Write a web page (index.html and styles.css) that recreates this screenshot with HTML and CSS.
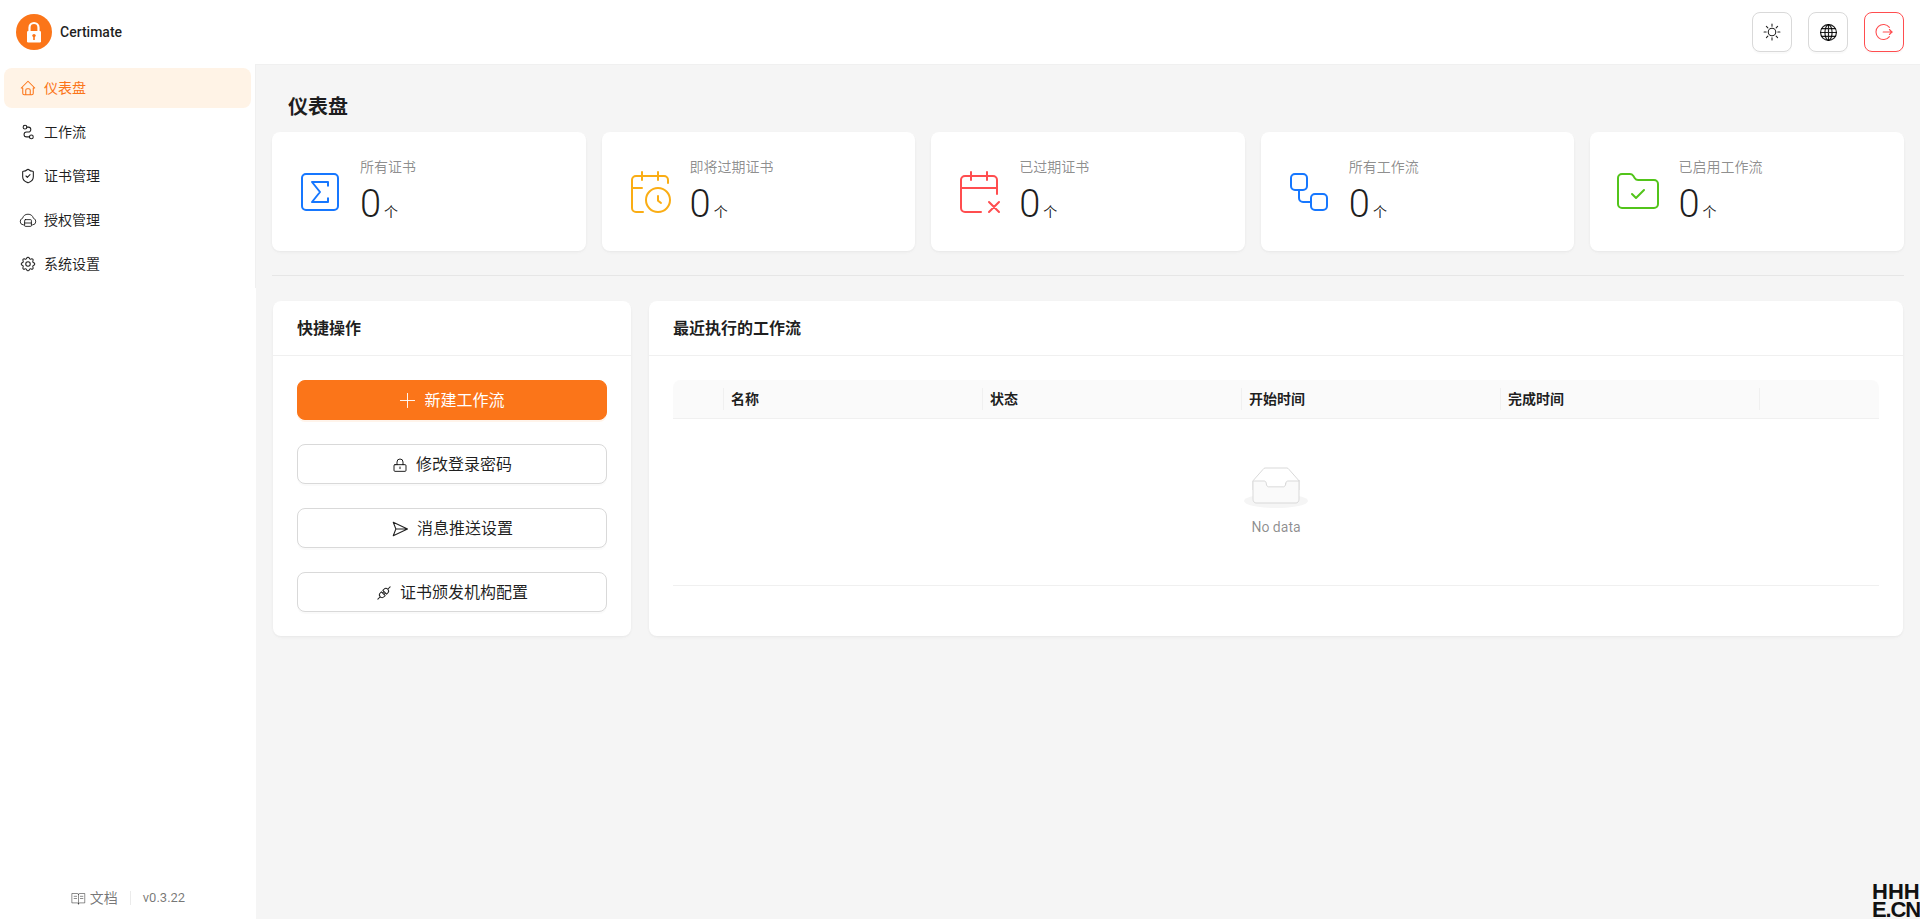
FILE: index.html
```html
<!DOCTYPE html>
<html lang="zh-CN">
<head>
<meta charset="utf-8">
<title>Certimate</title>
<link rel="stylesheet" href="styles.css">
</head>
<body>
<div class="app">
  <aside class="sidebar">
    <div class="brand">
      <svg class="logo" viewBox="0 0 36 36"><circle cx="18" cy="18" r="18" fill="#fb7519"/><path d="M13.5 18v-4.5a4.500 4.500 0 0 1 9 0V18" fill="none" stroke="#fff" stroke-width="2.200"/><rect x="11" y="17" width="14" height="11.500" rx="1.200" fill="#fff"/><circle cx="18" cy="21.600" r="1.700" fill="#fb7519"/><rect x="17.200" y="22" width="1.600" height="4" fill="#fb7519"/></svg>
      <span class="brand-name">Certimate</span>
    </div>
    <nav class="menu">
      <a class="menu-item active"><svg class="nav-ico" viewBox="0 0 24 24"><path d="M5 12H3l9-9 9 9h-2M5 12v7a2 2 0 0 0 2 2h10a2 2 0 0 0 2-2v-7M9 21v-6a2 2 0 0 1 2-2h2a2 2 0 0 1 2 2v6"/></svg><span>仪表盘</span></a>
      <a class="menu-item"><svg class="nav-ico" viewBox="0 0 24 24"><circle cx="8" cy="5.500" r="2.500"/><circle cx="16.500" cy="18.500" r="2.500"/><path d="M10.500 5.500h2a3.250 3.250 0 0 1 0 6.500h-2.500a3.250 3.250 0 0 0 0 6.500H14"/></svg><span>工作流</span></a>
      <a class="menu-item"><svg class="nav-ico small" viewBox="0 0 24 24"><path d="M20 13c0 5-3.500 7.500-7.660 8.950a1 1 0 0 1-.67-.010C7.500 20.500 4 18 4 13V6a1 1 0 0 1 1-1c2 0 4.500-1.200 6.240-2.720a1.170 1.170 0 0 1 1.520 0C14.510 3.810 17 5 19 5a1 1 0 0 1 1 1z"/><path d="m9 12 2 2 4-4"/></svg><span>证书管理</span></a>
      <a class="menu-item"><svg class="nav-ico light" viewBox="0 0 24 24"><path d="M7 18.500H6a4.500 4.500 0 0 1-1.200-8.800A7.500 7.500 0 0 1 19.200 9.700 4.500 4.500 0 0 1 18 18.500h-1"/><rect x="7.500" y="11.500" width="9" height="9" rx="1"/><path d="M7.500 16h9"/></svg><span>授权管理</span></a>
      <a class="menu-item"><svg class="nav-ico" viewBox="0 0 24 24"><path d="M10.325 4.317c.426-1.756 2.924-1.756 3.350 0a1.724 1.724 0 0 0 2.573 1.066c1.543-.940 3.310.826 2.370 2.370a1.724 1.724 0 0 0 1.065 2.572c1.756.426 1.756 2.924 0 3.350a1.724 1.724 0 0 0-1.066 2.573c.940 1.543-.826 3.310-2.370 2.370a1.724 1.724 0 0 0-2.572 1.065c-.426 1.756-2.924 1.756-3.350 0a1.724 1.724 0 0 0-2.573-1.066c-1.543.940-3.310-.826-2.370-2.370a1.724 1.724 0 0 0-1.065-2.572c-1.756-.426-1.756-2.924 0-3.350a1.724 1.724 0 0 0 1.066-2.573c-.940-1.543.826-3.310 2.370-2.370 1 .608 2.296.070 2.572-1.065z"/><circle cx="12" cy="12" r="3"/></svg><span>系统设置</span></a>
    </nav>
    <div class="side-foot">
      <a class="doc"><svg class="ico-book" viewBox="0 0 24 24"><path d="M2 4h8a2 2 0 0 1 2 2 2 2 0 0 1 2-2h8v15h-8a2 2 0 0 0-2 2 2 2 0 0 0-2-2H2zM12 6v15M5 8.500h4M5 12h4M15 8.500h4M15 12h4"/></svg><span>文档</span></a>
      <i class="foot-sep"></i>
      <span class="version">v0.3.22</span>
    </div>
  </aside>
  <div class="column">
    <header class="topbar">
      <button class="tool"><svg class="tool-ico" viewBox="0 0 24 24"><circle cx="12" cy="12" r="4.500"/><path d="M12 2.500v2.500M12 19v2.500M2.500 12H5M19 12h2.500M5.300 5.300 7 7M17 17l1.700 1.700M5.300 18.700 7 17M17 7l1.700-1.700"/></svg></button>
      <button class="tool"><svg class="tool-ico globe" viewBox="0 0 24 24"><circle cx="12" cy="12" r="10"/><ellipse cx="12" cy="12" rx="4.500" ry="10"/><path d="M12 2v20M2 12h20M3.500 7h17M3.500 17h17"/></svg></button>
      <button class="tool danger"><svg class="tool-ico" viewBox="0 0 24 24"><path d="M18.500 6.500a9 9 0 1 0 0 11"/><path d="M11 12h11M18.500 9l3 3-3 3"/></svg></button>
    </header>
    <main class="page">
      <h1 class="page-title">仪表盘</h1>
      <section class="stats">
        <div class="card stat">
          <svg class="stat-ico blue" viewBox="0 0 24 24"><rect x="3" y="3" width="18" height="18" rx="2"/><path d="M16 8.900V7H8l4 5-4 5h8v-1.900"/></svg>
          <div><div class="stat-label">所有证书</div><div class="stat-value"><b>0</b><span>个</span></div></div>
        </div>
        <div class="card stat">
          <svg class="stat-ico amber" viewBox="0 0 24 24"><path d="M21 7.500V6a2 2 0 0 0-2-2H5a2 2 0 0 0-2 2v14a2 2 0 0 0 2 2h3.500M16 2v4M8 2v4M3 10h5M17.500 17.500 16 16.300V14"/><circle cx="16" cy="16" r="6"/></svg>
          <div><div class="stat-label">即将过期证书</div><div class="stat-value"><b>0</b><span>个</span></div></div>
        </div>
        <div class="card stat">
          <svg class="stat-ico red" viewBox="0 0 24 24"><path d="M8 2v4M16 2v4M21 13V6a2 2 0 0 0-2-2H5a2 2 0 0 0-2 2v14a2 2 0 0 0 2 2h8M3 10h18M17 22l5-5M17 17l5 5"/></svg>
          <div><div class="stat-label">已过期证书</div><div class="stat-value"><b>0</b><span>个</span></div></div>
        </div>
        <div class="card stat">
          <svg class="stat-ico blue" viewBox="0 0 24 24"><rect x="3" y="3" width="8" height="8" rx="2"/><path d="M7 11v4a2 2 0 0 0 2 2h4"/><rect x="13" y="13" width="8" height="8" rx="2"/></svg>
          <div><div class="stat-label">所有工作流</div><div class="stat-value"><b>0</b><span>个</span></div></div>
        </div>
        <div class="card stat">
          <svg class="stat-ico green" viewBox="0 0 24 24"><path d="M20 20a2 2 0 0 0 2-2V8a2 2 0 0 0-2-2h-7.900a2 2 0 0 1-1.690-.900L9.600 3.900A2 2 0 0 0 7.930 3H4a2 2 0 0 0-2 2v13a2 2 0 0 0 2 2ZM9 13l2 2 4-4"/></svg>
          <div><div class="stat-label">已启用工作流</div><div class="stat-value"><b>0</b><span>个</span></div></div>
        </div>
      </section>
      <hr class="divider">
      <section class="panels">
        <div class="card panel quick">
          <div class="panel-head">快捷操作</div>
          <div class="panel-body actions">
            <button class="btn primary"><svg class="ico-plus" viewBox="0 0 24 24"><path d="M12 2v20M2 12h20"/></svg>新建工作流</button>
            <button class="btn"><svg class="ico16" viewBox="0 0 24 24"><rect x="3" y="11.500" width="18" height="10" rx="1.500"/><path d="M7.500 11.500V7.500a4.500 4.500 0 0 1 9 0v4M12 15v2.500"/></svg>修改登录密码</button>
            <button class="btn"><svg class="ico-send" viewBox="0 0 24 24"><path d="M3 3 22 12 3 21 6.500 12zM6.500 12H22"/></svg>消息推送设置</button>
            <button class="btn"><svg class="ico-plug" viewBox="0 0 24 24"><g transform="rotate(-45 12 12)"><path d="M10.500 8H8a4 4 0 0 0 0 8h2.500zM13.500 8H16a4 4 0 0 1 0 8h-2.500zM10.500 10.500h3M10.500 13.500h3M-1 12h5M20 12h5"/></g></svg>证书颁发机构配置</button>
          </div>
        </div>
        <div class="card panel recent">
          <div class="panel-head">最近执行的工作流</div>
          <div class="panel-body">
            <table class="table">
              <thead>
                <tr><th class="col-first"></th><th class="col">名称</th><th class="col">状态</th><th class="col">开始时间</th><th class="col">完成时间</th><th></th></tr>
              </thead>
              <tbody>
                <tr><td colspan="6" class="empty-cell">
                  <svg class="empty-ico" width="64" height="41" viewBox="0 0 64 41"><g transform="translate(0 1)" fill="none" fill-rule="evenodd"><ellipse fill="#f5f5f5" cx="32" cy="33" rx="32" ry="7"/><g fill-rule="nonzero" stroke="#d9d9d9"><path d="M55 12.760 44.854 1.258C44.367.474 43.656 0 42.907 0H21.093c-.749 0-1.460.474-1.947 1.257L9 12.761V22h46v-9.240z"/><path d="M41.613 15.931c0-1.605.994-2.930 2.227-2.931H55v18.137C55 33.260 53.680 35 52.050 35h-40.100C10.320 35 9 33.259 9 31.137V13h11.160c1.233 0 2.227 1.323 2.227 2.928v.022c0 1.605 1.005 2.901 2.237 2.901h14.752c1.232 0 2.237-1.308 2.237-2.913v-.007z" fill="#fafafa"/></g></g></svg>
                  <div class="empty-text">No data</div>
                </td></tr>
              </tbody>
            </table>
          </div>
        </div>
      </section>
    </main>
  </div>
  <div class="watermark"><span class="wm-top">HHH</span><span class="wm-bottom">E.CN</span></div>
</div>
</body>
</html>
```
FILE: styles.css
```css
* { box-sizing: border-box; }
html, body { margin: 0; height: 100%; }
body {
  font-family: Roboto, "Noto Sans CJK SC", sans-serif;
  font-size: 14px;
  line-height: 22px;
  color: rgba(0, 0, 0, .88);
  background: #f5f5f5;
  overflow: hidden;
}
svg { fill: none; stroke: currentColor; stroke-linecap: round; stroke-linejoin: round; flex: none; display: block; }
.app { display: flex; height: 919px; position: relative; overflow: hidden; }

.sidebar { width: 256px; flex: none; background: #fff; display: flex; flex-direction: column; }
.brand { height: 64px; display: flex; align-items: center; gap: 8px; padding-left: 16px; }
.logo { width: 36px; height: 36px; stroke: none; }
.brand-name { font-weight: 500; font-size: 14px; }
.menu { height: 224px; padding: 4px; display: flex; flex-direction: column; gap: 4px; border-right: 1px solid rgba(5, 5, 5, .06); }
.menu-item { height: 40px; display: flex; align-items: center; gap: 7px; padding-left: 15px; border-radius: 8px; }
.menu-item.active { background: #fff3e6; color: #fb7519; }
.nav-ico { width: 18px; height: 18px; stroke-width: 1.400; }
.nav-ico.small { width: 16px; height: 16px; margin: 0 1px; stroke-width: 1.600; }
.nav-ico.light { stroke-width: 1.200; }
.ico16 { width: 16px; height: 16px; stroke-width: 1.500; }
.ico-send { width: 18px; height: 18px; stroke-width: 1.400; }
.ico-plug { width: 16px; height: 16px; stroke-width: 1.500; overflow: hidden; }
.ico-plus { width: 17px; height: 17px; stroke-width: 1.300; }

.side-foot { margin-top: auto; height: 42px; display: flex; align-items: center; justify-content: center; color: rgba(0, 0, 0, .55); gap: 12px; }
.doc { display: flex; align-items: center; gap: 4px; }
.version { font-size: 13px; }
.ico-book { width: 15px; height: 15px; stroke-width: 1.300; }
.foot-sep { width: 1px; height: 14px; background: rgba(5, 5, 5, .08); }

.column { flex: 1; min-width: 0; display: flex; flex-direction: column; }
.topbar { height: 65px; flex: none; background: #fff; display: flex; justify-content: flex-end; align-items: flex-start; gap: 16px; padding: 12px 16px 0 0; border-bottom: 1px solid #f0f0f0; }
.tool { width: 40px; height: 40px; border: 1px solid #d9d9d9; border-radius: 8px; background: #fff; padding: 0; display: flex; align-items: center; justify-content: center; color: rgba(0, 0, 0, .88); box-shadow: 0 2px 0 rgba(0, 0, 0, .02); }
.tool.danger { border-color: #ff4d4f; color: #ff4d4f; }
.tool-ico { width: 20px; height: 20px; stroke-width: 1.300; }
.tool-ico.globe { stroke-width: 1.500; width: 19px; height: 19px; }

.page { padding: 15px 16px 16px; flex: 1; }
.page-title { margin: 0; height: 52px; padding: 0 16px; font-size: 20px; line-height: 54px; font-weight: 600; }
.card { background: #fff; border-radius: 8px; box-shadow: 0 1px 2px 0 rgba(0, 0, 0, .03), 0 1px 6px -1px rgba(0, 0, 0, .02), 0 2px 4px 0 rgba(0, 0, 0, .02); }
.stats { display: grid; grid-template-columns: repeat(5, 1fr); gap: 16px; }
.stat { height: 119px; padding: 24px; display: flex; align-items: center; gap: 16px; }
.stat-ico { width: 48px; height: 48px; stroke-width: 1; }
.blue { color: #1677ff; }
.amber { color: #faad14; }
.red { color: #ff4d4f; }
.green { color: #52c41a; }
.stat-label { color: rgba(0, 0, 0, .45); }
.stat-value { display: flex; align-items: baseline; gap: 3px; height: 47px; margin-top: 2px; line-height: 49px; }
.stat-value b { font-weight: 300; font-size: 38px; }
.stat-value span { font-size: 14px; color: rgba(0, 0, 0, .88); }
.divider { border: 0; border-top: 1px solid rgba(5, 5, 5, .06); margin: 24px 0 25px; }

.panels { display: flex; gap: 18px; padding: 0 1px; }
.panel { display: flex; flex-direction: column; }
.quick { width: 358px; flex: none; }
.recent { flex: 1; min-width: 0; }
.panel-head { height: 55px; flex: none; padding: 1px 24px 0; display: flex; align-items: center; font-size: 16px; font-weight: 600; border-bottom: 1px solid #f0f0f0; }
.panel-body { padding: 24px; }
.actions { display: flex; flex-direction: column; gap: 24px; }
.btn { height: 40px; border: 1px solid #d9d9d9; border-radius: 8px; background: #fff; font: inherit; font-size: 16px; color: rgba(0, 0, 0, .88); display: flex; align-items: center; justify-content: center; gap: 8px; padding: 1px 0 0; box-shadow: 0 2px 0 rgba(0, 0, 0, .02); }
.btn.primary { background: #fb7519; border-color: #fb7519; color: #fff; box-shadow: 0 2px 0 rgba(255, 150, 60, .1); }

.table { width: 100%; border-collapse: separate; border-spacing: 0; table-layout: fixed; }
.table th { height: 39px; background: #fafafa; border-bottom: 1px solid #f0f0f0; padding: 0 8px; text-align: left; font-weight: 600; position: relative; }
.table th:first-child { border-top-left-radius: 8px; }
.table th:last-child { border-top-right-radius: 8px; }
.col-first { width: 50px; }
.col { width: 259px; }
.table th.col::before, .table th:last-child::before { content: ""; position: absolute; left: 0; top: 50%; width: 1px; height: 22px; margin-top: -11px; background: #f0f0f0; }
.empty-cell { height: 167px; border-bottom: 1px solid #f0f0f0; text-align: center; padding: 0; vertical-align: middle; }
.empty-ico { margin: 0 auto 8px; stroke: none; }
.empty-text { color: rgba(0, 0, 0, .45); }

.watermark { position: absolute; right: 0; bottom: 0; width: 48px; font-family: "Liberation Sans", sans-serif; font-weight: 700; font-size: 22px; line-height: 18px; color: #111; white-space: nowrap; }
.wm-top, .wm-bottom { display: block; }
.wm-bottom { letter-spacing: -1.100px; }
```
